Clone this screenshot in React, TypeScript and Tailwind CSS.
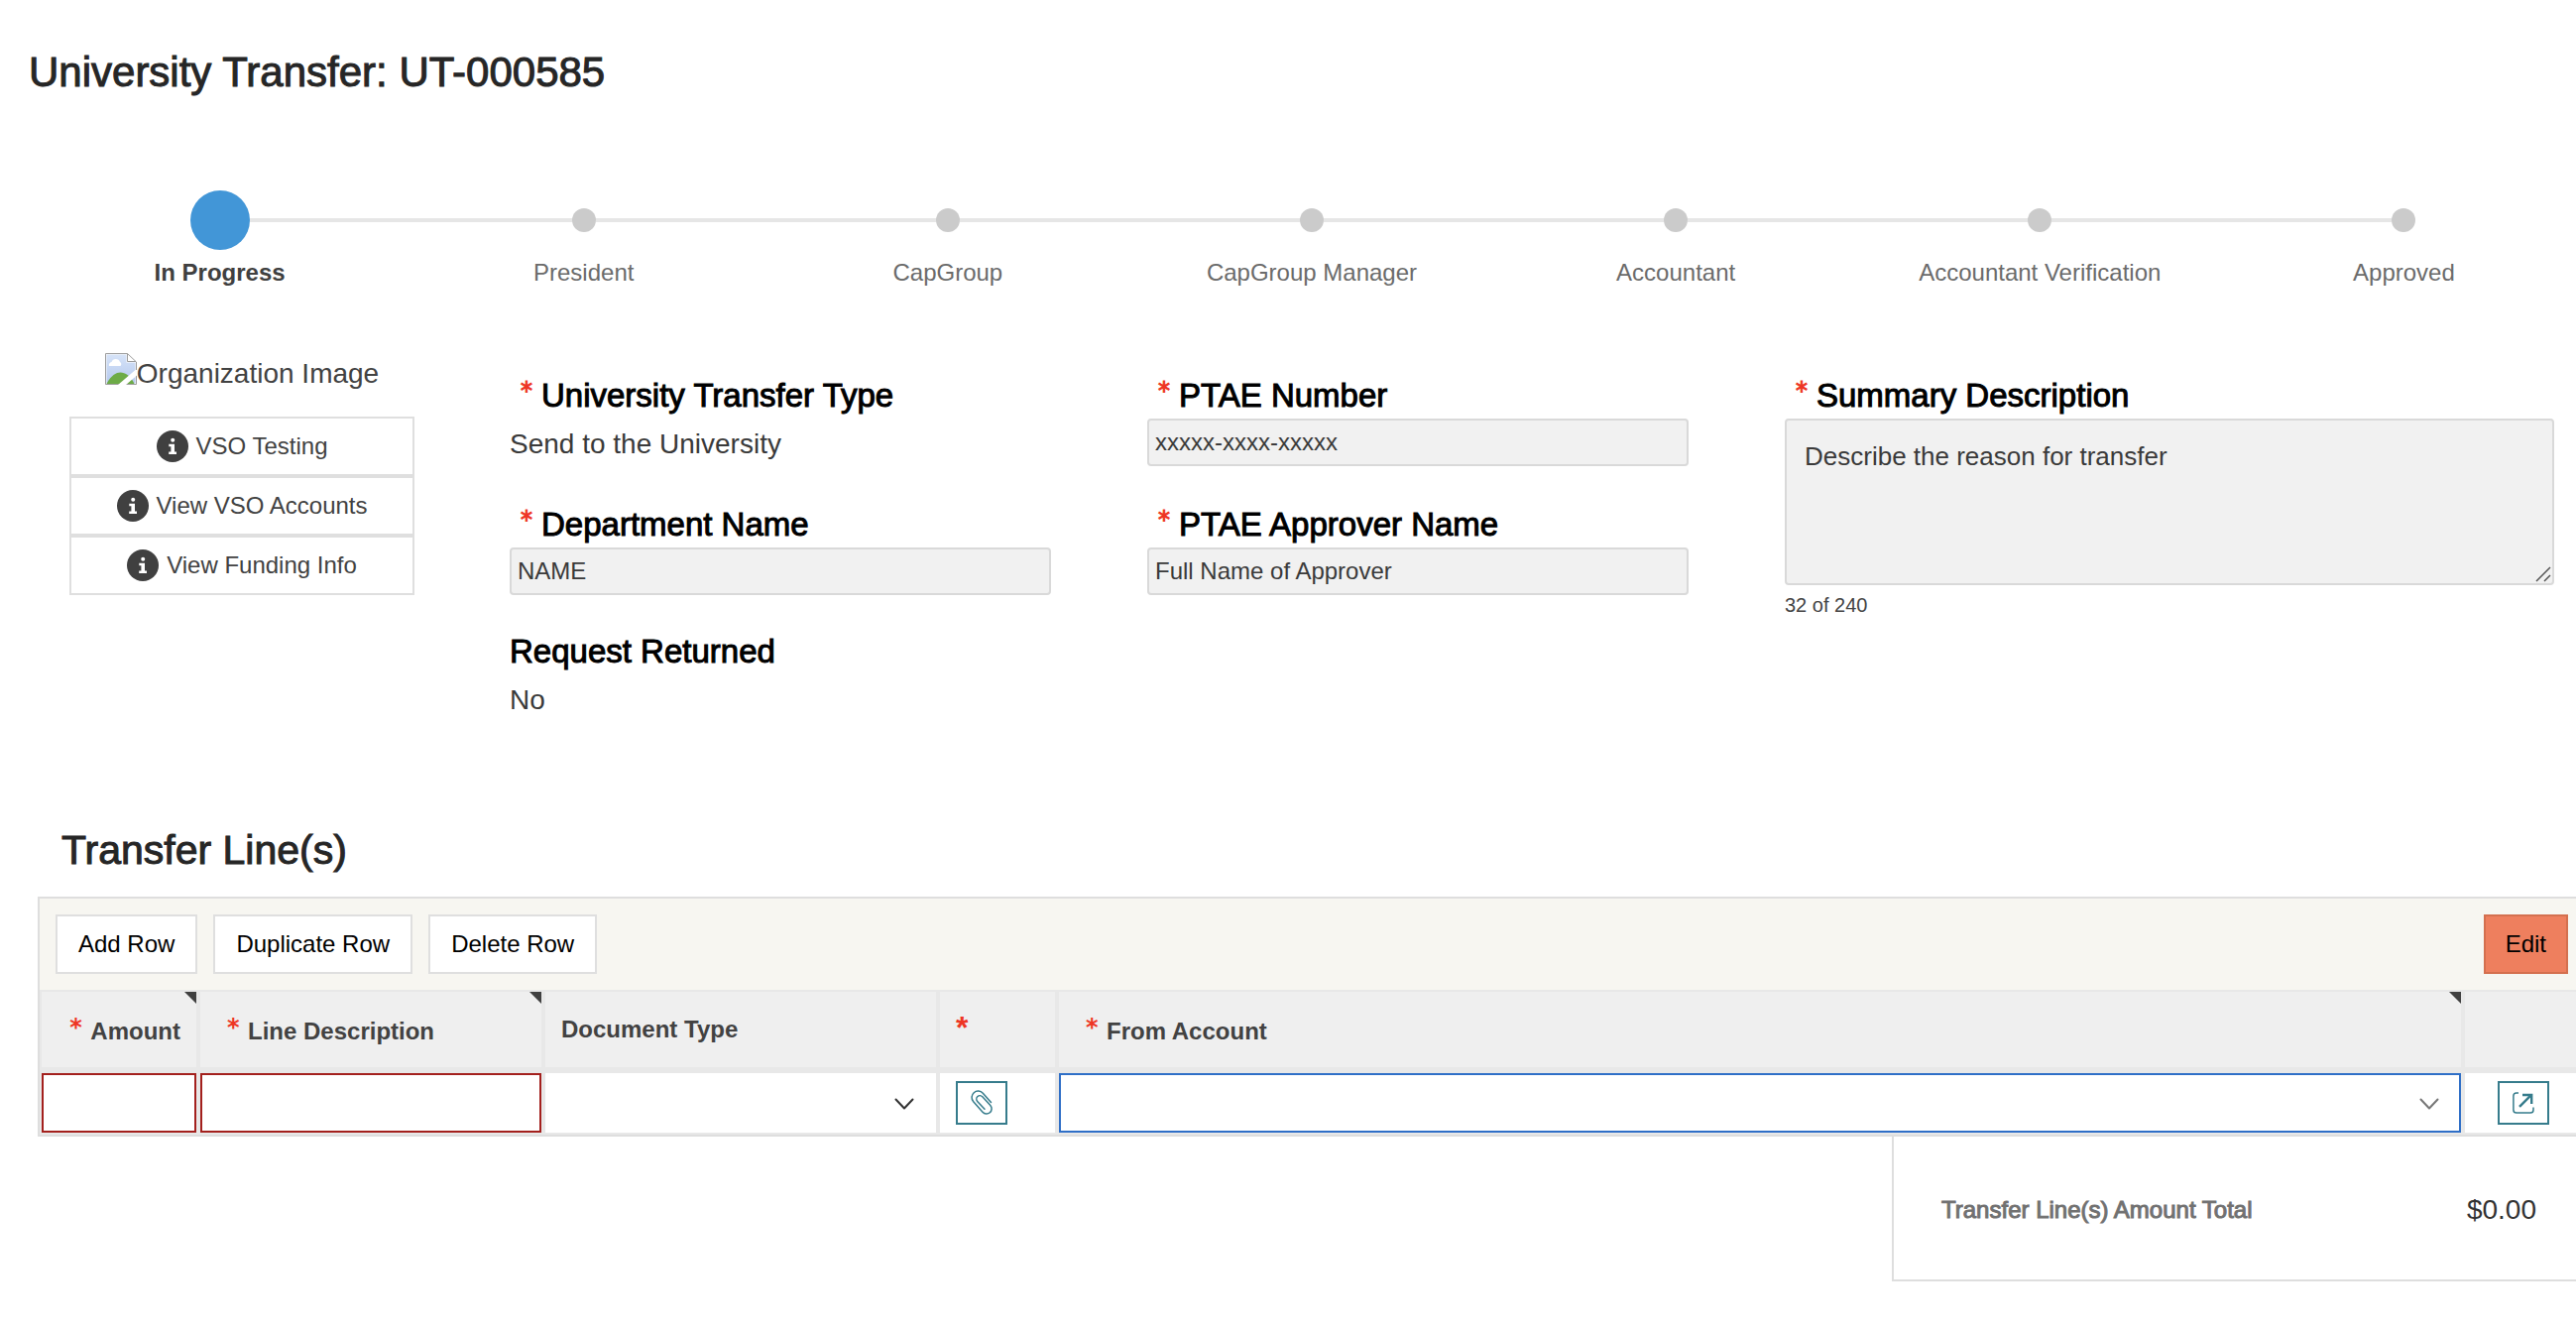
import { useState } from "react";
import type { ReactNode } from "react";

const steps = ["In Progress", "President", "CapGroup", "CapGroup Manager", "Accountant", "Accountant Verification", "Approved"];

function Stepper() {
  return (
    <ol className="ml-[38px] -mr-[10px] grid grid-cols-7" aria-label="Progress">
      {steps.map((name, i) => (
        <li key={name} className="flex flex-col items-center" aria-current={i === 0 ? "step" : undefined}>
          <div className="flex h-[60px] w-full items-center">
            <span className={i === 0 ? "h-1 flex-1" : "h-1 flex-1 bg-[#e6e6e6]"} />
            <span className={i === 0 ? "size-[60px] rounded-full bg-[#4296d7]" : "size-6 rounded-full bg-[#cbcbcb]"} />
            <span className={i === steps.length - 1 ? "h-1 flex-1" : "h-1 flex-1 bg-[#e6e6e6]"} />
          </div>
          <span
            className={
              i === 0
                ? "mt-2 text-2xl leading-[30px] font-bold text-[#404040]"
                : "mt-2 text-2xl leading-[30px] text-[#6b6b6b]"
            }
          >
            {name}
          </span>
        </li>
      ))}
    </ol>
  );
}

function Star() {
  return (
    <span aria-hidden="true" className="inline-block w-8 shrink-0 pl-[11px] text-left align-top font-['DejaVu_Sans'] text-2xl leading-6 text-[#ee3524]">
      *
    </span>
  );
}

function FieldLabel({ id, required, children }: { id?: string; required?: boolean; children: ReactNode }) {
  const cls = "flex h-10 items-start text-[33px] leading-[34px] text-black [-webkit-text-stroke:1px]";
  const body = (
    <>
      {required && <Star />}
      {children}
    </>
  );
  return id ? (
    <label htmlFor={id} className={cls}>
      {body}
    </label>
  ) : (
    <div className={cls}>{body}</div>
  );
}

function TextField({ id, label, initial }: { id: string; label: string; initial: string }) {
  return (
    <div className="h-[130px]">
      <FieldLabel id={id} required>
        {label}
      </FieldLabel>
      <input
        id={id}
        type="text"
        defaultValue={initial}
        className="block h-12 w-full rounded border-2 border-[#d9d9d9] bg-[#f1f1f1] px-1.5 text-2xl text-[#3a3a3a]"
      />
    </div>
  );
}

function BrokenImage() {
  return (
    <svg viewBox="0 0 32 32" className="size-8 shrink-0" aria-hidden="true">
      <defs>
        <linearGradient id="sky" x1="0" y1="0" x2="0" y2="1">
          <stop offset="0" stopColor="#d6e3f8" />
          <stop offset="1" stopColor="#b5c9ee" />
        </linearGradient>
      </defs>
      <path d="M.5.5H22.500L31.500 9V31.500H.5Z" fill="#fff" stroke="#9c9c9c" />
      <path d="M1.500 1.500H21.500V9.500H30.500V30.500H1.500Z" fill="url(#sky)" />
      <path d="M4 13a3 3 0 0 1 2.500-4 4.500 4.500 0 0 1 8.500 0 2.500 2.500 0 0 1 .5 4Z" fill="#fff" />
      <path d="M1.500 31C6 22.500 11 19.500 15.500 19.500S26 23 29.500 31Z" fill="#6dab47" />
      <path d="M22.500.5V8.500H31" fill="none" stroke="#9c9c9c" />
      <path d="M13 32 30.500 17H32V22.500L21 32Z" fill="#fff" />
    </svg>
  );
}

function InfoIcon() {
  return (
    <svg viewBox="0 0 32 32" className="size-8 shrink-0" aria-hidden="true">
      <circle cx="16" cy="16" r="16" fill="#404040" />
      <circle cx="16.2" cy="9.800" r="2" fill="#fff" />
      <path d="M12.300 13.700H18V21.500H20V24H12.200V21.500H14.400V16.200H12.300Z" fill="#fff" />
    </svg>
  );
}

function OrgPanel() {
  return (
    <div className="ml-[70px] w-[348px] shrink-0">
      <div role="img" aria-label="Organization Image" className="mb-[22px] flex items-start justify-center text-[28px] leading-[42px] text-[#424242]">
        <BrokenImage />
        <span>Organization Image</span>
      </div>
      {["VSO Testing", "View VSO Accounts", "View Funding Info"].map((t) => (
        <button
          key={t}
          type="button"
          className="flex h-[60px] w-full items-center justify-center gap-2 border-2 border-[#dfdfdf] bg-white text-2xl text-[#424242]"
        >
          <InfoIcon />
          {t}
        </button>
      ))}
    </div>
  );
}

function Chevron({ className }: { className: string }) {
  return (
    <svg viewBox="0 0 20 12" className={className} fill="none" strokeLinecap="round" strokeLinejoin="round" aria-hidden="true">
      <path d="M1.500 1.500 10 10.500 18.500 1.500" />
    </svg>
  );
}

function Corner() {
  return (
    <svg viewBox="0 0 12 12" className="absolute top-0 right-0 size-3" aria-hidden="true">
      <path d="M0 0H12V12Z" fill="#404040" />
    </svg>
  );
}

function ToolButton({ children }: { children: ReactNode }) {
  return (
    <button type="button" className="h-[60px] border-2 border-[#dfdfdf] bg-white px-[21px] text-2xl text-black">
      {children}
    </button>
  );
}

const th = "relative h-[82px] border-2 border-b-4 border-[#e8e8e8] bg-[#efefef] px-4 text-left font-bold";
const td = "h-16 border-2 border-[#e8e8e8] bg-white p-0";

function RequiredHeading({ children }: { children: ReactNode }) {
  return (
    <>
      <span className="inline-flex h-8 items-start leading-8">
        <Star />
        {children}
      </span>
      <Corner />
    </>
  );
}

function Lines() {
  return (
    <section className="ml-[38px] -mr-[10px]">
      <div className="border-2 border-[#dedede] bg-[#f7f6f1]">
        <div className="flex gap-4 p-4">
          <ToolButton>Add Row</ToolButton>
          <ToolButton>Duplicate Row</ToolButton>
          <ToolButton>Delete Row</ToolButton>
          <button type="button" className="ml-auto h-[60px] border-2 border-[#d4704f] bg-[#ee7f5e] px-5 text-2xl text-black">
            Edit
          </button>
        </div>
        <table className="w-full table-fixed border-separate border-spacing-0 text-2xl text-[#424242]">
          <colgroup>
            <col className="w-40" />
            <col className="w-[348px]" />
            <col className="w-[398px]" />
            <col className="w-[120px]" />
            <col />
            <col className="w-[122px]" />
          </colgroup>
          <thead>
            <tr>
              <th className="relative h-[82px] border-2 border-b-4 border-[#e8e8e8] bg-[#efefef] pr-4 pl-0 text-right font-bold">
                <RequiredHeading>Amount</RequiredHeading>
              </th>
              <th className={th}>
                <RequiredHeading>Line Description</RequiredHeading>
              </th>
              <th className={th}>Document Type</th>
              <th className={th} aria-label="Attachment">
                <span className="block h-10 text-[32px] leading-9 text-[#ee3524]">*</span>
              </th>
              <th className={th}>
                <RequiredHeading>From Account</RequiredHeading>
              </th>
              <th className={th} aria-label="Open" />
            </tr>
          </thead>
          <tbody>
            <tr>
              <td className={td}>
                <input aria-label="Amount" className="block h-[60px] w-full border-2 border-[#a3201d] px-3" />
              </td>
              <td className={td}>
                <input aria-label="Line Description" className="block h-[60px] w-full border-2 border-[#a3201d] px-3" />
              </td>
              <td className={td}>
                <div className="relative">
                  <select aria-label="Document Type" className="block h-[60px] w-full appearance-none bg-white px-3">
                    <option value="" />
                  </select>
                  <Chevron className="pointer-events-none absolute top-[25px] right-[22px] h-3 w-5 stroke-[#333] stroke-2" />
                </div>
              </td>
              <td className={td}>
                <button type="button" aria-label="Attach file" className="ml-4 flex h-11 w-[52px] items-center justify-center border-2 border-[#367c8c] bg-white">
                  <svg viewBox="0 0 22 26" className="h-[26px] w-[22px]" fill="none" stroke="#367c8c" strokeWidth="1.500" strokeLinecap="round" aria-hidden="true">
                    <path d="M20.500 12.500 12.300 3.200A6.400 6.400 0 0 0 2.700 11.800L12 22.300A5.200 5.200 0 0 0 19.800 15.400L11.800 6.800A3.400 3.400 0 0 0 6.700 11.400L14 19.300" />
                  </svg>
                </button>
              </td>
              <td className={td}>
                <div className="relative">
                  <select aria-label="From Account" className="block h-[60px] w-full appearance-none border-2 border-[#2f6fc7] bg-white px-3">
                    <option value="" />
                  </select>
                  <Chevron className="pointer-events-none absolute top-[25px] right-[22px] h-3 w-5 stroke-[#777] stroke-2" />
                </div>
              </td>
              <td className={td}>
                <button type="button" aria-label="Open line" className="mx-auto flex h-11 w-[52px] items-center justify-center border-2 border-[#367c8c] bg-white">
                  <svg viewBox="0 0 22 22" className="size-[22px]" fill="none" stroke="#367c8c" aria-hidden="true">
                    <path strokeWidth="1.500" d="M6 .9H4Q.9.900.9 4V18Q.9 21.100 4 21.100H18Q21 21.100 21 18V15.500" />
                    <path strokeWidth="2.400" d="M7 14.800 18.500 3.300M10 3H19.200V12" />
                  </svg>
                </button>
              </td>
            </tr>
          </tbody>
        </table>
      </div>
      <div className="ml-auto flex h-[146px] w-[700px] items-center justify-between border-2 border-t-0 border-[#dedede] pt-6 pr-12 pb-5 pl-12">
        <span className="text-2xl text-[#717171] [-webkit-text-stroke:1px]">Transfer Line(s) Amount Total</span>
        <span className="text-[28px] text-[#333]">$0.00</span>
      </div>
    </section>
  );
}

export default function App() {
  const [summary, setSummary] = useState("Describe the reason for transfer");
  return (
    <main className="min-h-screen overflow-hidden bg-white font-['Liberation_Sans',Arial,sans-serif]">
      <h1 className="mt-12 ml-[29px] text-[42px] leading-[50px] text-[#262626] [-webkit-text-stroke:1px]">University Transfer: UT-000585</h1>
      <div className="mt-[94px]">
        <Stepper />
      </div>
      <div className="mt-[66px] flex">
        <OrgPanel />
        <div className="mt-[26px] ml-24 grid flex-1 grid-cols-[546fr_546fr_776fr] gap-x-[97px] pr-[22px]">
          <div>
            <div className="h-[130px]">
              <FieldLabel required>University Transfer Type</FieldLabel>
              <p className="mt-[6px] text-[28px] leading-10 text-[#3a3a3a]">Send to the University</p>
            </div>
            <TextField id="dept" label="Department Name" initial="NAME" />
            <div className="-mt-0.5">
              <FieldLabel>Request Returned</FieldLabel>
              <p className="mt-[6px] text-[28px] leading-10 text-[#3a3a3a]">No</p>
            </div>
          </div>
          <div>
            <TextField id="ptae" label="PTAE Number" initial="xxxxx-xxxx-xxxxx" />
            <TextField id="approver" label="PTAE Approver Name" initial="Full Name of Approver" />
          </div>
          <div>
            <FieldLabel id="summary" required>
              Summary Description
            </FieldLabel>
            <div className="relative">
              <textarea
                id="summary"
                value={summary}
                onChange={(e) => setSummary(e.target.value)}
                maxLength={240}
                className="block h-[168px] w-full resize-none rounded border-2 border-[#d9d9d9] bg-[#f1f1f1] px-[18px] py-5 text-[26px] leading-8 text-[#3a3a3a]"
              />
              <svg viewBox="0 0 16 16" className="pointer-events-none absolute right-[3px] bottom-[3px] size-4" stroke="#555" strokeWidth="1.500" aria-hidden="true">
                <path d="M1 15 15 1M9 15 15 9" />
              </svg>
            </div>
            <p className="mt-2 text-xl leading-6 text-[#444]">{summary.length} of 240</p>
          </div>
        </div>
      </div>
      <h2 className="mt-[106px] mb-[22px] ml-[62px] text-[41px] leading-[50px] text-[#262626] [-webkit-text-stroke:1px]">Transfer Line(s)</h2>
      <Lines />
    </main>
  );
}
